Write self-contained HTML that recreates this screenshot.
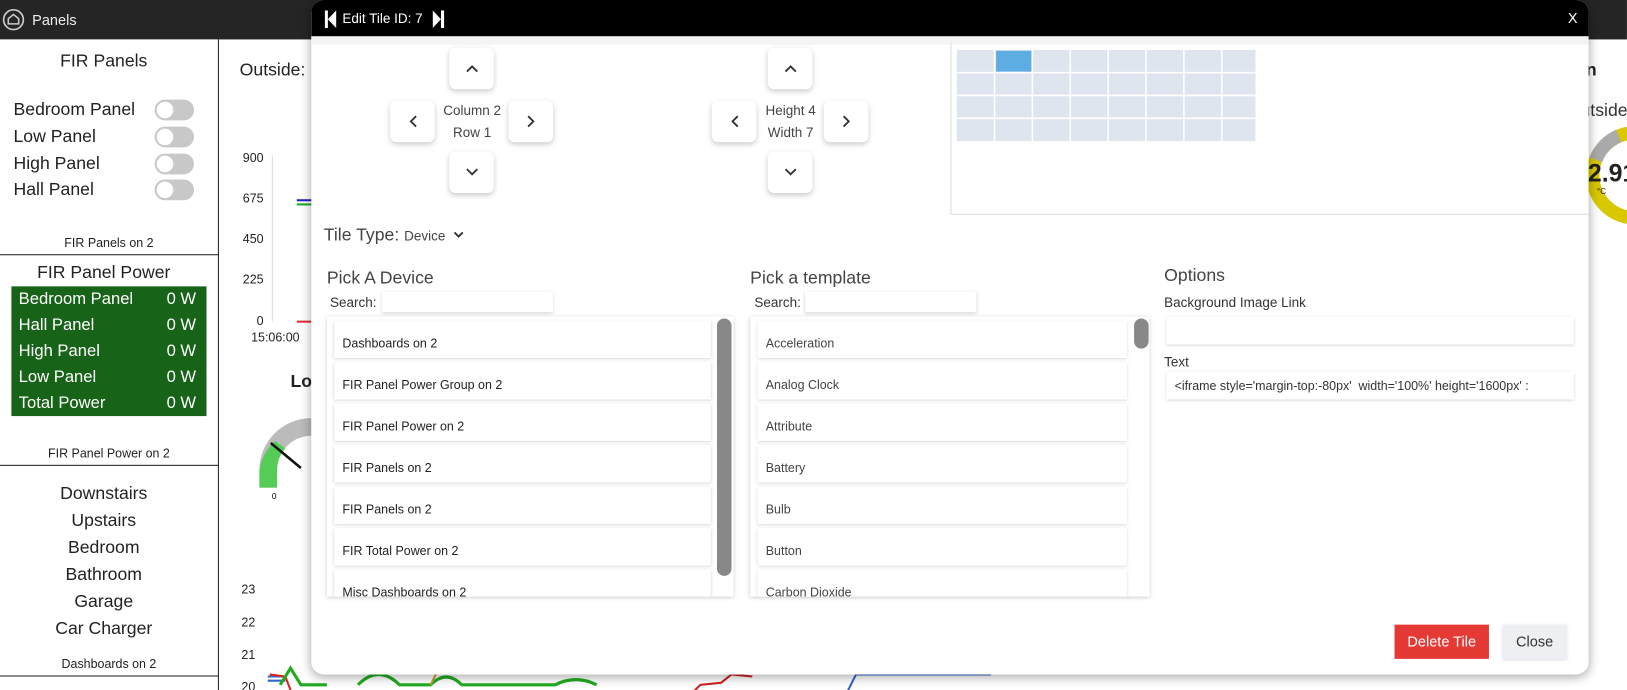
<!DOCTYPE html>
<html><head><meta charset="utf-8"><style>
*{box-sizing:border-box;margin:0;padding:0}
html,body{width:1627px;height:690px;overflow:hidden;background:#fff}
body{font-family:"Liberation Sans",sans-serif;color:#222;position:relative}
#wrap{position:absolute;left:0;top:0;width:1568px;height:665px;transform:scale(1.0376);transform-origin:0 0;overflow:hidden}
.abs{position:absolute;white-space:nowrap}
.top{position:absolute;left:0;top:0;width:1568px;height:38px;background:#252525;color:#fff}
.side{position:absolute;left:0;top:38px;width:211px;height:630px;border-right:1px solid #222;background:#fff}
.tog{position:absolute;left:149px;width:38px;height:20px;border-radius:10px;background:#c8c8c8}
.tog:after{content:"";position:absolute;left:2px;top:2px;width:16px;height:16px;border-radius:50%;background:#fff}
.hr{position:absolute;left:0;width:211px;height:1px;background:#222}
.modal{position:absolute;left:300px;top:0;width:1231px;height:650px;background:#fff;border-radius:12px;box-shadow:0 2px 10px rgba(0,0,0,.35);overflow:hidden}
.mh{position:absolute;left:0;top:0;width:1231px;height:35px;background:#000;color:#fff}
.btn{position:absolute;width:43px;height:40px;background:#fff;border-radius:6px;box-shadow:0 2px 5px rgba(0,0,0,.2);display:flex;align-items:center;justify-content:center}
.list{position:absolute;top:305px;height:270px;background:#fff;box-shadow:0 1px 4px rgba(0,0,0,.25);overflow:hidden}
.it{position:absolute;left:7px;height:36px;background:#fff;box-shadow:0 1px 3px rgba(0,0,0,.18);font-size:12px;padding:15px 0 0 8px;color:#222}
.inp{position:absolute;background:#fff;box-shadow:0 1px 3px rgba(0,0,0,.2)}
.yl{position:absolute;font-size:12px;text-align:right;width:24px;left:230px}
</style></head><body><div id="wrap">
<div class="top">
<svg class="abs" style="left:2px;top:8px" width="22" height="22" viewBox="0 0 22 22"><circle cx="11" cy="11" r="9.5" fill="none" stroke="#ccc" stroke-width="1.6"/><path d="M6 15V10L11 6L16 10V15Z" fill="none" stroke="#ccc" stroke-width="1.5"/></svg>
<div class="abs" style="left:31px;top:11px;font-size:14px;color:#eee">Panels</div>
</div>
<div class="side">
<div class="abs" style="left:0;width:200px;text-align:center;top:11px;font-size:17px">FIR Panels</div>
<div class="abs" style="left:13px;top:58px;font-size:17px">Bedroom Panel</div><div class="tog" style="top:58px"></div>
<div class="abs" style="left:13px;top:84px;font-size:17px">Low Panel</div><div class="tog" style="top:84px"></div>
<div class="abs" style="left:13px;top:110px;font-size:17px">High Panel</div><div class="tog" style="top:110px"></div>
<div class="abs" style="left:13px;top:135px;font-size:17px">Hall Panel</div><div class="tog" style="top:135px"></div>
<div class="abs" style="left:0;width:210px;text-align:center;top:189px;font-size:12px">FIR Panels on 2</div>
<div class="hr" style="top:207px"></div>
<div class="abs" style="left:0;width:200px;text-align:center;top:215px;font-size:17px">FIR Panel Power</div>
<div class="abs" style="left:11px;top:238px;width:188px;height:125px;background:#176317;color:#fff;font-size:16px">
<div class="abs" style="left:7px;top:4px">Bedroom Panel</div><div class="abs" style="right:10px;top:4px">0 W</div>
<div class="abs" style="left:7px;top:29px">Hall Panel</div><div class="abs" style="right:10px;top:29px">0 W</div>
<div class="abs" style="left:7px;top:54px">High Panel</div><div class="abs" style="right:10px;top:54px">0 W</div>
<div class="abs" style="left:7px;top:79px">Low Panel</div><div class="abs" style="right:10px;top:79px">0 W</div>
<div class="abs" style="left:7px;top:104px">Total Power</div><div class="abs" style="right:10px;top:104px">0 W</div>
</div>
<div class="abs" style="left:0;width:210px;text-align:center;top:392px;font-size:12px">FIR Panel Power on 2</div>
<div class="hr" style="top:410px"></div>
<div class="abs" style="left:0;width:200px;text-align:center;top:425px;font-size:17px;line-height:26px">Downstairs<br>Upstairs<br>Bedroom<br>Bathroom<br>Garage<br>Car Charger</div>
<div class="abs" style="left:0;width:210px;text-align:center;top:595px;font-size:12px">Dashboards on 2</div>
<div class="hr" style="top:613px"></div>
</div>
<!-- background main -->
<div class="abs" style="left:231px;top:58px;font-size:17px">Outside: 1</div>
<div class="yl" style="top:145px">900</div>
<div class="yl" style="top:184px">675</div>
<div class="yl" style="top:223px">450</div>
<div class="yl" style="top:262px">225</div>
<div class="yl" style="top:302px">0</div>
<div class="abs" style="left:242px;top:318px;font-size:12px">15:06:00</div>
<div class="abs" style="left:262px;top:150px;width:1px;height:160px;background:#ddd"></div>
<div class="abs" style="left:286px;top:192px;width:15px;height:2px;background:#22c"></div>
<div class="abs" style="left:286px;top:196px;width:15px;height:2px;background:#2a2"></div>
<div class="abs" style="left:286px;top:309px;width:15px;height:2px;background:#d33"></div>
<div class="abs" style="left:280px;top:358px;font-size:17px;font-weight:bold">Lo</div>
<svg class="abs" style="left:245px;top:395px" width="60" height="90"><path d="M55 8A50 50 0 0 0 5 58L5 75 22 75 22 58A33 33 0 0 1 55 25Z" fill="#bbb"/><path d="M20 30A50 50 0 0 0 5 58V75H22V58A33 33 0 0 1 30 37Z" fill="#5c5"/><path d="M16 32L45 56" stroke="#111" stroke-width="2.5"/><text x="17" y="86" font-size="8" font-family="Liberation Sans">0</text></svg>
<div class="yl" style="top:561px;left:222px">23</div>
<div class="yl" style="top:593px;left:222px">22</div>
<div class="yl" style="top:624px;left:222px">21</div>
<div class="yl" style="top:655px;left:222px">20</div>
<svg class="abs" style="left:255px;top:640px" width="1300" height="30"><path d="M3 12H20M3 16H20" stroke="#36c" stroke-width="2"/><path d="M5 10L20 12L25 25" stroke="#d22" stroke-width="2" fill="none"/><path d="M15 20L25 4L35 20H60M90 20Q110 0 130 20H160Q175 5 190 20H280Q300 10 320 20" stroke="#2a2" stroke-width="3" fill="none"/><path d="M410 30L420 20 440 18 450 10 470 12" stroke="#c22" stroke-width="2" fill="none"/><path d="M420 35V30H560L570 10H700" stroke="#36c" stroke-width="2" fill="none"/><path d="M160 20L170 0" stroke="#c93" stroke-width="2"/></svg>
<div class="abs" style="left:1518px;top:58px;font-size:17px;font-weight:bold">on</div>
<div class="abs" style="left:1510px;top:97px;font-size:17px;color:#333">Outside</div>
<svg class="abs" style="left:1520px;top:116px" width="107" height="110"><circle cx="56" cy="53" r="41" fill="none" stroke="#d9c800" stroke-width="13"/><path d="M18 38A41 41 0 0 1 40 15" stroke="#aaa" stroke-width="13" fill="none"/></svg>
<div class="abs" style="left:1517px;top:154px;font-size:24px;font-weight:bold">12.91</div>
<div class="abs" style="left:1539px;top:180px;font-size:8px">°C</div>

<div class="modal">
<div class="mh">
<svg class="abs" style="left:13px;top:10px" width="12" height="17"><rect x="0" y="0" width="3" height="17" fill="#fff"/><path d="M11 0V17L3 8.5Z" fill="#fff"/></svg>
<div class="abs" style="left:30px;top:10px;font-size:13px">Edit Tile ID: 7</div>
<svg class="abs" style="left:117px;top:10px" width="12" height="17"><path d="M0 0V17L8 8.5Z" fill="#fff"/><rect x="8" y="0" width="3" height="17" fill="#fff"/></svg>
<div class="abs" style="left:1211px;top:9px;font-size:14px">X</div>
</div>
<div class="abs" style="left:0;top:35px;width:1231px;height:8px;background:#f4f4f4"></div>
<div class="btn" style="left:133px;top:46px"><svg width="12" height="8"><path d="M1 7L6 2L11 7" stroke="#333" stroke-width="1.8" fill="none"/></svg></div>
<div class="btn" style="left:76px;top:97px"><svg width="8" height="12"><path d="M7 1L2 6L7 11" stroke="#333" stroke-width="1.8" fill="none"/></svg></div>
<div class="btn" style="left:190px;top:97px"><svg width="8" height="12"><path d="M1 1L6 6L1 11" stroke="#333" stroke-width="1.8" fill="none"/></svg></div>
<div class="btn" style="left:133px;top:146px"><svg width="12" height="8"><path d="M1 1L6 6L11 1" stroke="#333" stroke-width="1.8" fill="none"/></svg></div>
<div class="abs" style="left:115px;width:80px;text-align:center;top:96px;font-size:13px;color:#444;line-height:21px">Column 2<br>Row 1</div>
<div class="btn" style="left:440px;top:46px"><svg width="12" height="8"><path d="M1 7L6 2L11 7" stroke="#333" stroke-width="1.8" fill="none"/></svg></div>
<div class="btn" style="left:386px;top:97px"><svg width="8" height="12"><path d="M7 1L2 6L7 11" stroke="#333" stroke-width="1.8" fill="none"/></svg></div>
<div class="btn" style="left:494px;top:97px"><svg width="8" height="12"><path d="M1 1L6 6L1 11" stroke="#333" stroke-width="1.8" fill="none"/></svg></div>
<div class="btn" style="left:440px;top:146px"><svg width="12" height="8"><path d="M1 1L6 6L11 1" stroke="#333" stroke-width="1.8" fill="none"/></svg></div>
<div class="abs" style="left:422px;width:80px;text-align:center;top:96px;font-size:13px;color:#444;line-height:21px">Height 4<br>Width 7</div>
<div class="abs" style="left:616px;top:41px;width:615px;height:166px;border:1px solid #ddd;border-right:none;border-top:none"></div>
<svg class="abs" style="left:622px;top:48px" width="288" height="95">
<rect x="0" y="0" width="288" height="88" fill="#dfe5ee"/>
<g stroke="#fff" stroke-width="1.5"><path d="M36.5 0V88M73 0V88M109.5 0V88M146 0V88M182.5 0V88M219 0V88M255.5 0V88"/><path d="M0 22H288M0 44H288M0 66H288"/></g>
<rect x="38" y="1" width="34" height="20" fill="#5dade2"/>
</svg>
<div class="abs" style="left:12px;top:217px;font-size:17px;color:#444">Tile Type: <span style="font-size:13px">Device</span></div>
<svg class="abs" style="left:137px;top:223px" width="10" height="7"><path d="M1 1L5 5L9 1" stroke="#333" stroke-width="1.8" fill="none"/></svg>
<div class="abs" style="left:15px;top:258px;font-size:17px;color:#444">Pick A Device</div>
<div class="abs" style="left:18px;top:284px;font-size:13px;color:#333">Search:</div>
<div class="inp" style="left:68px;top:281px;width:165px;height:20px"></div>
<div class="list" style="left:15px;width:392px">
<div class="it" style="top:4px;width:363px">Dashboards on 2</div>
<div class="it" style="top:44px;width:363px">FIR Panel Power Group on 2</div>
<div class="it" style="top:84px;width:363px">FIR Panel Power on 2</div>
<div class="it" style="top:124px;width:363px">FIR Panels on 2</div>
<div class="it" style="top:164px;width:363px">FIR Panels on 2</div>
<div class="it" style="top:204px;width:363px">FIR Total Power on 2</div>
<div class="it" style="top:244px;width:363px">Misc Dashboards on 2</div>
<div class="abs" style="left:376px;top:2px;width:14px;height:248px;border-radius:7px;background:#888"></div>
</div>
<div class="abs" style="left:423px;top:258px;font-size:17px;color:#444">Pick a template</div>
<div class="abs" style="left:427px;top:284px;font-size:13px;color:#333">Search:</div>
<div class="inp" style="left:476px;top:281px;width:165px;height:20px"></div>
<div class="list" style="left:423px;width:385px">
<div class="it" style="top:4px;width:356px;color:#444">Acceleration</div>
<div class="it" style="top:44px;width:356px;color:#444">Analog Clock</div>
<div class="it" style="top:84px;width:356px;color:#444">Attribute</div>
<div class="it" style="top:124px;width:356px;color:#444">Battery</div>
<div class="it" style="top:164px;width:356px;color:#444">Bulb</div>
<div class="it" style="top:204px;width:356px;color:#444">Button</div>
<div class="it" style="top:244px;width:356px;color:#444">Carbon Dioxide</div>
<div class="abs" style="left:370px;top:2px;width:14px;height:29px;border-radius:7px;background:#888"></div>
</div>
<div class="abs" style="left:822px;top:256px;font-size:17px;color:#444">Options</div>
<div class="abs" style="left:822px;top:284px;font-size:13px;color:#333">Background Image Link</div>
<div class="inp" style="left:824px;top:305px;width:393px;height:27px"></div>
<div class="abs" style="left:822px;top:341px;font-size:13px;color:#333">Text</div>
<div class="inp" style="left:824px;top:358px;width:393px;height:27px;overflow:hidden"><div class="abs" style="left:8px;top:7px;font-size:12px;color:#333">&lt;iframe style='margin-top:-80px'&nbsp; width='100%' height='1600px' :</div></div>
<div class="abs" style="left:1044px;top:602px;width:91px;height:33px;background:#e53935;color:#fff;font-size:14px;text-align:center;line-height:33px">Delete Tile</div>
<div class="abs" style="left:1148px;top:602px;width:62px;height:33px;background:#edf0f3;color:#333;font-size:14px;text-align:center;line-height:33px;box-shadow:0 1px 3px rgba(0,0,0,.15)">Close</div>
</div>
</div></body></html>
